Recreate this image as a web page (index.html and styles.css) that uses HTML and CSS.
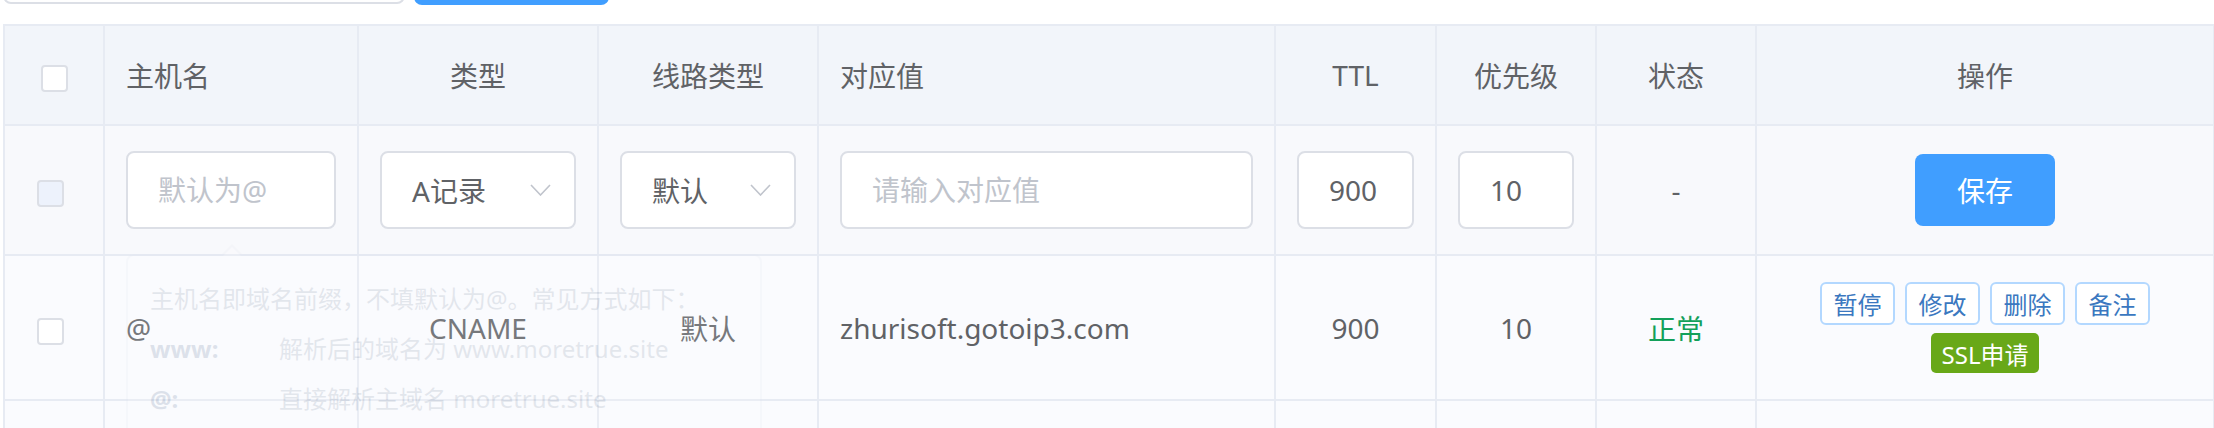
FILE: index.html
```html
<!DOCTYPE html>
<html lang="zh-CN">
<head>
<meta charset="utf-8">
<title>域名解析记录</title>
<link rel="stylesheet" href="styles.css">
</head>
<body>
<div class="page">
	<div class="toolbar">
		<input class="search" type="text">
		<button class="btn_primary btn_search">搜索</button>
	</div>

	<table class="dns_table">
		<colgroup>
			<col class="c_check"><col class="c_host"><col class="c_type"><col class="c_line"><col class="c_value"><col class="c_ttl"><col class="c_mx"><col class="c_state"><col class="c_ops">
		</colgroup>
		<tr class="table_headers">
			<th><span class="checkbox"></span></th>
			<th class="left">主机名</th>
			<th>类型</th>
			<th>线路类型</th>
			<th class="left">对应值</th>
			<th>TTL</th>
			<th>优先级</th>
			<th>状态</th>
			<th>操作</th>
		</tr>
		<tr class="row_new">
			<td class="check_cell"><span class="checkbox disabled"></span></td>
			<td>
				<div class="field">
					<input class="text_input" type="text" placeholder="默认为@">
					<div class="popover">
						<p>主机名即域名前缀，不填默认为@。常见方式如下：</p>
						<p><b>www:</b><span>解析后的域名为 www.moretrue.site</span></p>
						<p><b>@:</b><span>直接解析主域名 moretrue.site</span></p>
					</div>
				</div>
			</td>
			<td>
				<div class="select"><span>A记录</span>
					<svg width="21" height="12" viewBox="0 0 21 12"><polyline points="1,1 10.5,11 20,1" fill="none" stroke="#c0c4cc" stroke-width="1.6"/></svg>
				</div>
			</td>
			<td>
				<div class="select"><span>默认</span>
					<svg width="21" height="12" viewBox="0 0 21 12"><polyline points="1,1 10.5,11 20,1" fill="none" stroke="#c0c4cc" stroke-width="1.6"/></svg>
				</div>
			</td>
			<td><input class="text_input" type="text" placeholder="请输入对应值"></td>
			<td><input class="text_input" type="text" value="900"></td>
			<td><input class="text_input" type="text" value="10"></td>
			<td class="center">-</td>
			<td class="center"><button class="btn_primary btn_save">保存</button></td>
		</tr>
		<tr class="row_record">
			<td class="check_cell"><span class="checkbox"></span></td>
			<td>@</td>
			<td class="center">CNAME</td>
			<td class="center">默认</td>
			<td>zhurisoft.gotoip3.com</td>
			<td class="center">900</td>
			<td class="center">10</td>
			<td class="center state_ok">正常</td>
			<td class="center">
				<div class="op_btns">
					<button class="btn_op">暂停</button>
					<button class="btn_op">修改</button>
					<button class="btn_op">删除</button>
					<button class="btn_op">备注</button>
				</div>
				<button class="btn_ssl">SSL申请</button>
			</td>
		</tr>
		<tr class="row_record">
			<td></td><td></td><td></td><td></td><td></td><td></td><td></td><td></td><td></td>
		</tr>
	</table>
</div>
</body>
</html>
```

FILE: styles.css
```css
html, body {
	margin: 0;
	overflow: hidden;
	background: #ffffff;
}
body {
	font-family: "Noto Sans", "Noto Sans CJK SC", sans-serif;
	font-size: 28px;
	color: #606266;
}
.page {
	margin-top: -76px;
	padding-left: 3px;
}
.toolbar {
	display: flex;
	align-items: flex-start;
	gap: 9px;
	margin-bottom: 19px;
}
.search {
	box-sizing: border-box;
	width: 402px;
	height: 80px;
	border: 2px solid #dcdfe6;
	border-radius: 8px;
	outline: none;
}
.btn_primary {
	border: none;
	border-radius: 8px;
	background: #409eff;
	color: #ffffff;
	font-family: inherit;
	font-size: 28px;
}
.btn_search {
	width: 195px;
	height: 81px;
}
.dns_table {
	border-collapse: collapse;
	table-layout: fixed;
	width: 2212px;
}
.c_check { width: 100px; }
.c_host { width: 254px; }
.c_type { width: 240px; }
.c_line { width: 220px; }
.c_value { width: 457px; }
.c_ttl { width: 161px; }
.c_mx { width: 160px; }
.c_state { width: 160px; }
.dns_table th, .dns_table td {
	border: 2px solid #e7ebf3;
	padding: 0 21px;
	vertical-align: middle;
	font-weight: normal;
	text-align: left;
}
.dns_table th {
	text-align: center;
}
.dns_table th.left {
	text-align: left;
}
.dns_table td.center {
	text-align: center;
}
.table_headers {
	background: #f2f5fa;
}
.table_headers th {
	height: 98px;
}
.row_new {
	background: #f8f9fc;
}
.row_new td {
	height: 128px;
}
.row_record {
	background: #fafbfe;
}
.row_record td {
	height: 143px;
}
.checkbox {
	display: inline-block;
	box-sizing: border-box;
	width: 27px;
	height: 27px;
	border: 2px solid #dcdfe6;
	border-radius: 4px;
	background: #ffffff;
	vertical-align: middle;
}
.checkbox.disabled {
	background: #edf2fc;
}
.dns_table td.check_cell {
	text-align: center;
	padding-right: 29px;
}

/* form row */
.field {
	position: relative;
}
.text_input {
	box-sizing: border-box;
	width: 100%;
	height: 78px;
	padding: 0 20px 0 30px;
	border: 2px solid #dcdfe6;
	border-radius: 8px;
	background: #ffffff;
	font-family: inherit;
	font-size: 28px;
	color: #606266;
	outline: none;
}
.text_input::placeholder {
	color: #c0c4cc;
}
.select {
	box-sizing: border-box;
	display: flex;
	align-items: center;
	justify-content: space-between;
	height: 78px;
	padding: 0 23px 0 30px;
	border: 2px solid #dcdfe6;
	border-radius: 8px;
	background: #ffffff;
}
.btn_save {
	width: 140px;
	height: 72px;
}

/* hint popover, caught mid fade-in */
.popover {
	position: absolute;
	top: 103px;
	left: 0;
	z-index: 5;
	box-sizing: border-box;
	width: 636px;
	padding: 18px 22px 24px;
	border: 2px solid #dde3ee;
	border-radius: 8px;
	background: #ffffff;
	color: #5a6b88;
	font-size: 24px;
	line-height: 50px;
	text-align: left;
	opacity: 0.14;
}
.popover::before, .popover::after {
	content: "";
	position: absolute;
	left: 93px;
	border: 11px solid transparent;
	border-top: none;
}
.popover::before {
	top: -12px;
	border-bottom: 11px solid #dde3ee;
}
.popover::after {
	top: -9px;
	border-bottom: 11px solid #ffffff;
}
.popover p {
	margin: 0;
	white-space: nowrap;
}
.popover b {
	display: inline-block;
	width: 129px;
	color: #2c4a78;
}

/* record row */
.state_ok {
	color: #13a05a;
}
.op_btns {
	display: flex;
	justify-content: center;
	gap: 10px;
}
.btn_op {
	box-sizing: border-box;
	width: 75px;
	height: 43px;
	padding: 0;
	border: 2px solid #b3d8ff;
	border-radius: 6px;
	background: #ffffff;
	color: #3b78c0;
	font-family: inherit;
	font-size: 24px;
}
.btn_ssl {
	height: 40px;
	margin-top: 8px;
	padding: 0 11px;
	border: none;
	border-radius: 5px;
	background: #68a818;
	color: #ffffff;
	font-family: inherit;
	font-size: 24px;
}
```
